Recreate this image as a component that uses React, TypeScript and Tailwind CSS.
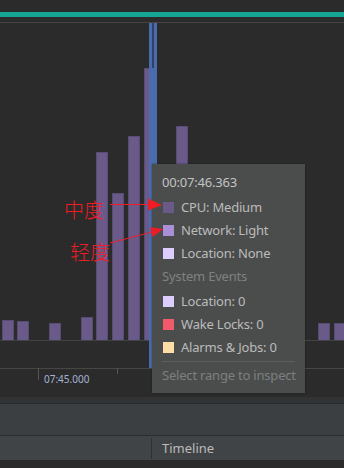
import React from "react";

const bars: [number, number, number][] = [
  [2, 12, 320],
  [17, 12, 321],
  [49, 12, 323],
  [81, 12, 317],
  [96, 12, 152],
  [112, 12, 193],
  [128, 12, 136],
  [144, 12, 68],
  [176, 12, 126],
  [318, 12, 323],
  [334, 12, 323],
];

const OFF = 23;

function Chart() {
  return (
    <svg width={344} height={374} viewBox="0 0 344 374" className="block shrink-0">
      <g transform={`translate(0,${-OFF})`}>
        {bars.map(([x, w, top], i) => (
          <rect
            key={i}
            x={x + 0.5}
            y={top + 0.5}
            width={w - 1}
            height={340 - top}
            fill="#6a5a8a"
            stroke="#584b74"
            strokeWidth={1}
          />
        ))}
        <rect x={0} y={340} width={344} height={1} fill="#434343" />
        <rect x={0} y={368} width={344} height={1} fill="#464646" />
        <rect x={38} y={368} width={1} height={12} fill="#555555" />
        <rect x={117} y={368} width={1} height={6} fill="#555555" />
        <text
          x={44}
          y={383}
          fontSize={10}
          fill="#a3b4d2"
          fontFamily='"Noto Sans", sans-serif'
        >
          07:45.000
        </text>
        <rect x={149} y={23} width={8} height={345} fill="#4a6cae" />
        <rect x={152} y={23} width={2} height={45} fill="#2f4263" />
      </g>
    </svg>
  );
}

function Swatch({ color }: { color: string }) {
  return <span className="block w-[11px] h-[11px] shrink-0" style={{ background: color }} />;
}

function Row({ color, label }: { color: string; label: string }) {
  return (
    <div className="flex items-center h-[23px] gap-[7px] pl-[1px]">
      <Swatch color={color} />
      <span className="text-[13px] leading-[23px] tracking-[-0.2px] text-[#bbbbbb] whitespace-nowrap">{label}</span>
    </div>
  );
}

function Tooltip() {
  return (
    <div className="absolute left-[152px] top-[164px] w-[153px] h-[229px] bg-[#4b4d4d] pt-[7px] pl-[10px] pr-[10px] flex flex-col shadow-[0_0_2px_rgba(0,0,0,0.4)]">
      <div className="h-[23px] mb-[2px] text-[13px] leading-[23px] tracking-[-0.2px] text-[#c2c2c2]">00:07:46.363</div>
      <Row color="#6a5a8a" label="CPU: Medium" />
      <Row color="#a990d6" label="Network: Light" />
      <Row color="#dccdfd" label="Location: None" />
      <div className="h-[25px] text-[13px] leading-[23px] tracking-[-0.2px] text-[#7f8181]">System Events</div>
      <Row color="#dccdfd" label="Location: 0" />
      <Row color="#f05a6a" label="Wake Locks: 0" />
      <Row color="#fddea6" label="Alarms & Jobs: 0" />
      <div className="mt-[2px] h-px bg-[#5c5e5e]" />
      <div className="h-[23px] mt-[2px] text-[13px] leading-[23px] tracking-[-0.2px] text-[#7d7f7f] whitespace-nowrap">
        Select range to inspect
      </div>
    </div>
  );
}

function Annotations() {
  return (
    <>
      <div
        className="absolute left-[64px] top-[200px] text-[20px] leading-[20px] font-light text-[#ee1c25]"
        style={{ fontFamily: '"Noto Sans CJK SC", sans-serif' }}
      >
        中度
      </div>
      <div
        className="absolute left-[70px] top-[242px] text-[20px] leading-[20px] font-light text-[#ee1c25]"
        style={{ fontFamily: '"Noto Sans CJK SC", sans-serif' }}
      >
        轻度
      </div>
      <svg className="absolute left-0 top-0 pointer-events-none" width={344} height={468}>
        <line x1={110} y1={204.5} x2={150} y2={204.5} stroke="#ee1c25" strokeWidth={1} />
        <polygon points="148,198.5 148,210.5 162,205" fill="#ee1c25" />
        <line x1={110} y1={243} x2={152} y2={232} stroke="#ee1c25" strokeWidth={1} />
        <polygon points="152.7,236.9 150.1,227.3 163,229" fill="#ee1c25" />
      </svg>
    </>
  );
}

export default function App() {
  return (
    <div
      className="relative w-[344px] h-[468px] overflow-hidden bg-[#2b2b2b] flex flex-col"
      style={{ fontFamily: '"Noto Sans", "Noto Sans CJK SC", sans-serif' }}
    >
      <div className="h-[12px] shrink-0" />
      <div className="h-[5px] shrink-0 bg-[#15a696]" />
      <div className="h-[5px] shrink-0" />
      <div className="h-px shrink-0 bg-[#454545]" />
      <Chart />
      <div className="h-[6px] shrink-0 bg-[#313335]" />
      <div className="h-px shrink-0 bg-[#2a2c2e]" />
      <div className="h-[31px] shrink-0 bg-[#3c3f41]" />
      <div className="h-px shrink-0 bg-[#2a2c2e]" />
      <div className="h-[24px] shrink-0 bg-[#414446] flex items-center">
        <div className="w-[151px] h-full" />
        <div className="w-px h-[21px] bg-[#2e3032]" />
        <span className="ml-[10px] text-[13px] leading-[24px] text-[#bbbbbb]">Timeline</span>
      </div>
      <div className="flex-1 bg-[#2b2b2b]" />
      <Tooltip />
      <Annotations />
    </div>
  );
}
